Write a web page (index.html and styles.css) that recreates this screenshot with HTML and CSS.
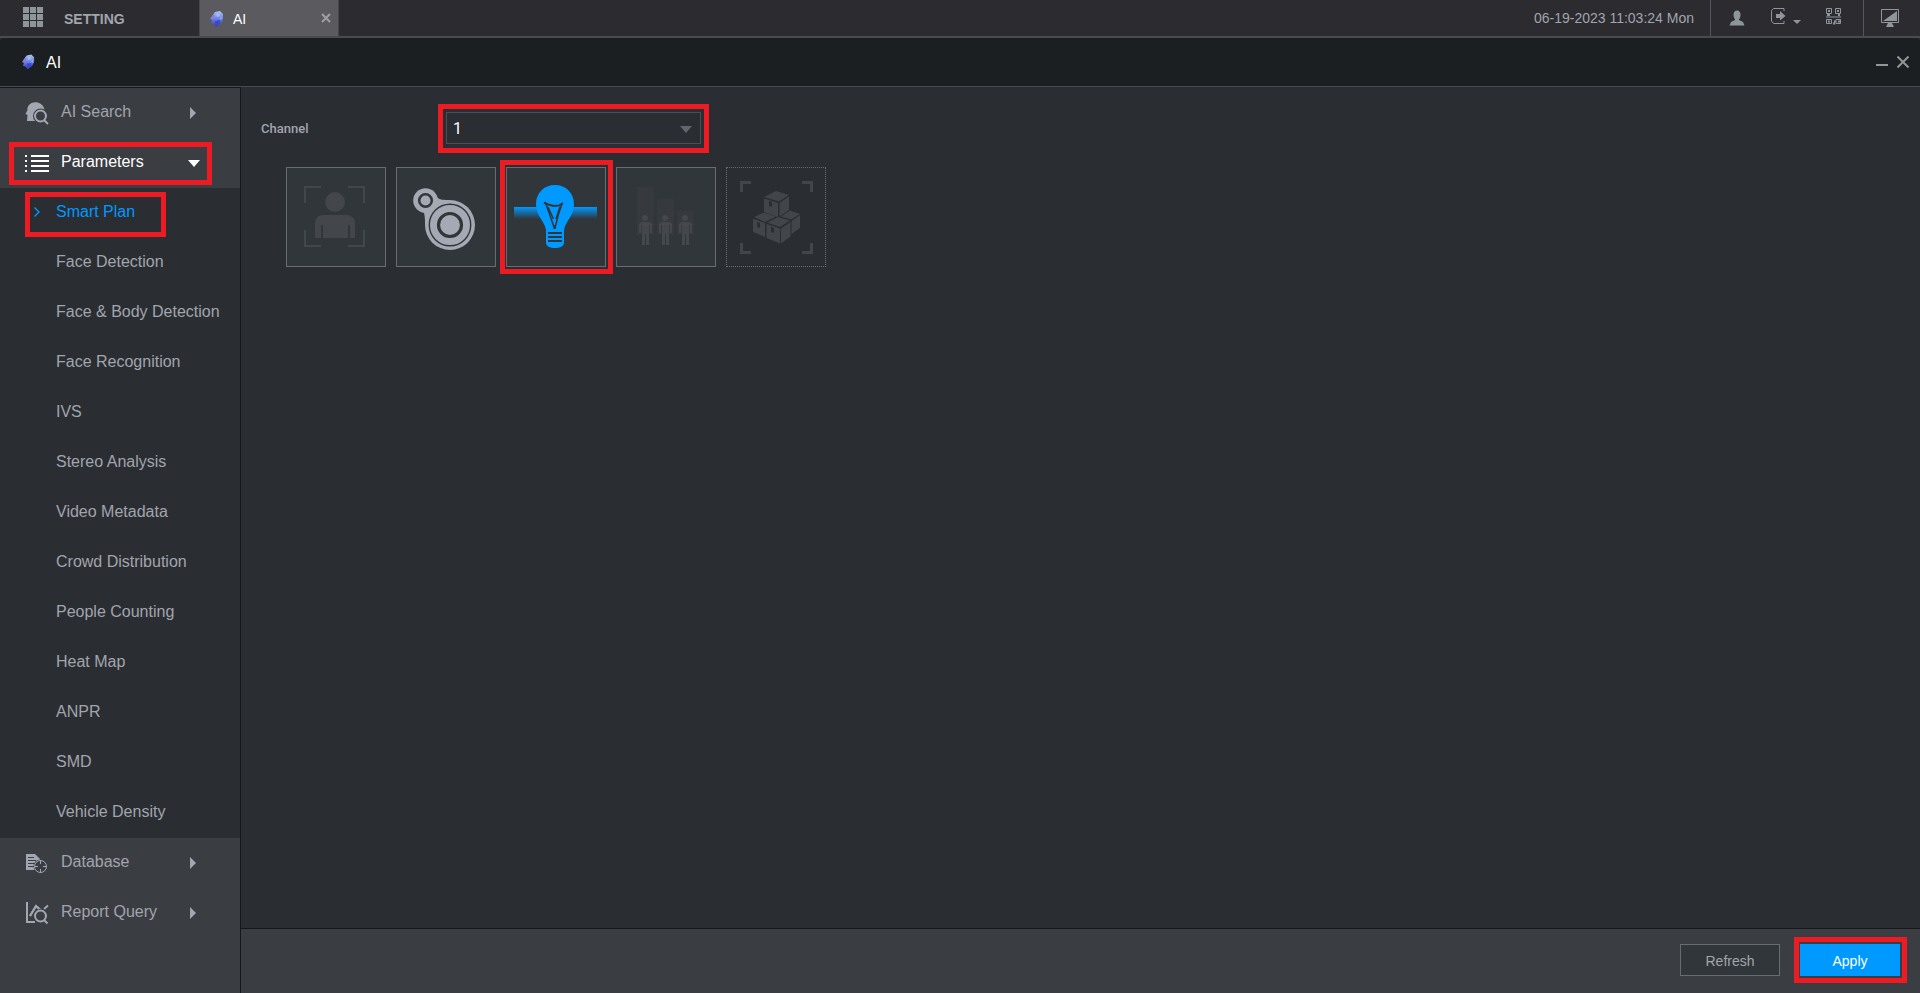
FILE: index.html
```
<!DOCTYPE html>
<html lang="en">
<head>
  <meta charset="UTF-8">
  <meta name="viewport" content="width=device-width, initial-scale=1.0">
  <title>AI - Smart Plan</title>
  <link rel="stylesheet" href="styles.css">
</head>
<body>

  <!-- shared gem logo -->
  <svg class="defs" width="0" height="0" aria-hidden="true">
    <defs>
      <linearGradient id="gem" x1="0" y1="0" x2="0" y2="1">
        <stop offset="0" stop-color="#b4c0f0"/>
        <stop offset="0.5" stop-color="#6a80e0"/>
        <stop offset="1" stop-color="#3434b4"/>
      </linearGradient>
      <linearGradient id="beam" x1="0" y1="0" x2="0" y2="1">
        <stop offset="0" stop-color="#0099ff"/>
        <stop offset="1" stop-color="#0099ff" stop-opacity="0"/>
      </linearGradient>
      <symbol id="logo" viewBox="0 0 14 16">
        <path fill="url(#gem)" d="M5 1 L10 0 L13 3 L13 8 L11 12 L6 16 L4 13 L1 12 L2 9 L0 8 L2 5 Z"/>
        <path fill="#8fc4f4" d="M6 3 L9 2 L10 5 L7 6 Z M10 7 L12 6 L11 9 Z"/>
        <path fill="#a565d8" d="M2 5 L4 3 L4 6 L3 7 Z M7 7 L9 6 L8 8 Z"/>
        <path fill="#3a48cc" d="M5 10 L10 9 L10 12 L6 15 Z"/>
      </symbol>
    </defs>
  </svg>

  <header class="topbar">
    <button class="home">
      <svg width="20" height="20" viewBox="0 0 20 20" fill="#8f969b" aria-hidden="true">
        <path d="M0 0h6v6H0z M7 0h6v6H7z M14 0h6v6h-6z M0 7h6v6H0z M7 7h6v6H7z M14 7h6v6h-6z M0 14h6v6H0z M7 14h6v6H7z M14 14h6v6h-6z"/>
      </svg>
      <span>SETTING</span>
    </button>
    <div class="tab">
      <svg width="14" height="16" aria-hidden="true"><use href="#logo"/></svg>
      <span class="tab-name">AI</span>
      <button class="tab-close" aria-label="Close tab">
        <svg width="10" height="10" viewBox="0 0 10 10" stroke="#a0a0a2" stroke-width="2"><path d="M1 1 L9 9 M9 1 L1 9"/></svg>
      </button>
    </div>
    <time class="clock">06-19-2023 11:03:24 Mon</time>
    <div class="tools">
      <button aria-label="User">
        <svg width="16" height="16" viewBox="0 0 16 16" fill="#8f969b"><ellipse cx="8" cy="5" rx="3.5" ry="4.5"/><path d="M6 8h4v2l4 2l1.500 3.500H.5L2 12l4-2z"/></svg>
      </button>
      <button class="logout" aria-label="Logout">
        <svg width="30" height="16" viewBox="0 0 30 16" fill="#8f969b">
          <path fill="none" stroke="#8f969b" d="M13 3V.5H2.500L.5 2.500V13l2 2.500H13V13"/>
          <path d="M5 6h4V3l5.500 5L9 12.500V10H5z M22 12h8l-4 4z"/>
        </svg>
      </button>
      <button class="qr" aria-label="QR code">
        <svg width="16" height="17" viewBox="0 0 16 17" fill="none" stroke="#8f969b">
          <path d="M.5.5h5v5h-5z M9.500.5h5v5h-5z M.5 11.500h5v4h-5z M10 11.500h4.500v4H10z M0 9h15"/>
          <path stroke-width="2" d="M2 3h2 M11 3h2 M2 13.500h2 M12 13.500h2 M1 7h3 M12 7h2 M7 15.500h2 M8 13.500h2"/>
        </svg>
      </button>
    </div>
    <div class="tools screen">
      <button aria-label="Display">
        <svg width="18" height="18" viewBox="0 0 18 18" fill="#8f969b">
          <path fill="none" stroke="#8f969b" d="M.5.5h17v13H.5z"/>
          <path d="M16 2v10H2z M7 14h4l2 4H5z"/>
        </svg>
      </button>
    </div>
  </header>

  <div class="titlebar">
    <svg width="13" height="16" aria-hidden="true"><use href="#logo"/></svg>
    <h1>AI</h1>
    <button class="minimize" aria-label="Minimize">
      <svg width="12" height="12" viewBox="0 0 12 12" fill="#959595"><path d="M0 8h12v2H0z"/></svg>
    </button>
    <button aria-label="Close">
      <svg width="12" height="12" viewBox="0 0 12 12" stroke="#959595" stroke-width="2"><path d="M.5.5 L11.500 11.500 M11.500.5 L.5 11.500"/></svg>
    </button>
  </div>

  <div class="window">
    <nav class="sidebar">
      <button class="group">
        <svg width="24" height="24" viewBox="0 0 24 24" aria-hidden="true">
          <path fill="#a1a6b0" d="M4 4C6 1 12 0 16 3C19 5 20 8 19 12L17 20H6L5 20H2L2.500 14L.5 13L2.500 9C2 7 3 5 4 4Z"/>
          <circle cx="15.500" cy="15" r="7.500" fill="#3a3d42"/>
          <circle cx="15.500" cy="15" r="5.500" fill="none" stroke="#a1a6b0" stroke-width="2"/>
          <path d="M19 19 L23 23" stroke="#a1a6b0" stroke-width="2"/>
        </svg>
        <span>AI Search</span>
        <i class="arrow"></i>
      </button>
      <button class="group open mark">
        <svg width="24" height="24" viewBox="0 0 24 24" fill="#fff" aria-hidden="true">
          <path d="M0 4h2v2H0z M0 9h2v2H0z M0 14h2v2H0z M0 19h2v2H0z M6 4h18v2H6z M6 9h18v2H6z M6 14h18v2H6z M6 19h18v2H6z"/>
        </svg>
        <span>Parameters</span>
        <i class="arrow"></i>
      </button>
      <div class="submenu">
        <a href="#" class="active mark">
          <svg class="chevron" width="6" height="10" viewBox="0 0 6 10" fill="none" stroke="#0099ff" stroke-width="1.400" aria-hidden="true"><path d="M.5.5 L5 5 L.5 9.500"/></svg>
          Smart Plan
        </a>
        <a href="#">Face Detection</a>
        <a href="#">Face &amp; Body Detection</a>
        <a href="#">Face Recognition</a>
        <a href="#">IVS</a>
        <a href="#">Stereo Analysis</a>
        <a href="#">Video Metadata</a>
        <a href="#">Crowd Distribution</a>
        <a href="#">People Counting</a>
        <a href="#">Heat Map</a>
        <a href="#">ANPR</a>
        <a href="#">SMD</a>
        <a href="#">Vehicle Density</a>
      </div>
      <button class="group">
        <svg width="24" height="24" viewBox="0 0 24 24" aria-hidden="true">
          <path fill="#a1a6b0" d="M1 3h9l5 5v11H1z"/>
          <path stroke="#3a3d42" d="M3 6.500h6 M3 9.500h8 M3 12.500h8 M3 15.500h8"/>
          <circle cx="15.500" cy="15.500" r="7" fill="#3a3d42"/>
          <circle cx="15.500" cy="15.500" r="6" fill="none" stroke="#a1a6b0"/>
          <path stroke="#a1a6b0" d="M15.500 9v4 M15.500 18v4 M9 15.500h4 M18 15.500h4"/>
        </svg>
        <span>Database</span>
        <i class="arrow"></i>
      </button>
      <button class="group">
        <svg width="24" height="24" viewBox="0 0 24 24" fill="none" stroke="#a1a6b0" stroke-width="2" aria-hidden="true">
          <path d="M2 1v20h8 M5 15 L11 5 L16 9 M19 8 L23 4.500"/>
          <circle cx="15.500" cy="15" r="7.500" fill="#3a3d42" stroke="none"/>
          <circle cx="15.500" cy="15" r="5.500"/>
          <path d="M19 19 L22.500 22.500 M5 15 L11 5 L14 8"/>
        </svg>
        <span>Report Query</span>
        <i class="arrow"></i>
      </button>
    </nav>

    <main class="content">
      <div class="plan">
        <div class="field">
          <label for="channel">Channel</label>
          <div class="select mark">
            <select id="channel">
              <option>1</option>
            </select>
          </div>
        </div>

        <div class="tiles">
          <button class="tile" aria-label="Face detection">
            <svg viewBox="0 0 98 98" fill="#43464a">
              <circle cx="48" cy="34" r="10"/>
              <path d="M28 70V55a8 8 0 0 1 8-8h24a8 8 0 0 1 8 8v15h-5V57h-2v13H36V57h-2v13z"/>
              <path fill="none" stroke="#43464a" stroke-width="2" d="M18 35V19h16 M61 19h16v16 M18 62v16h16 M61 78h16V62"/>
            </svg>
          </button>
          <button class="tile" aria-label="IVS">
            <svg viewBox="0 0 98 98" fill="#a4a9b3">
              <path d="M36 42L40 29C42 32 47 32 53 32L28 57C28 51 28 46 26 43Z"/>
              <circle cx="28.500" cy="32.500" r="12.300"/>
              <circle cx="53" cy="57" r="25"/>
              <g fill="none" stroke="#31363a">
                <circle cx="28.500" cy="32.500" r="6.300" stroke-width="2.500"/>
                <circle cx="53" cy="57" r="20.700" stroke-width="1.400"/>
                <circle cx="53" cy="57" r="11.500" stroke-width="3.200"/>
              </g>
            </svg>
          </button>
          <button class="tile mark" aria-label="Smart light">
            <svg viewBox="0 0 98 98" fill="#0099ff">
              <path fill="url(#beam)" d="M7 39h83v12H7z"/>
              <path d="M48 17C59 17 67 25 67 36C67 42 65 46 62 51C59 56 57 59 57 63V75C57 78 53 80 48 80S39 78 39 75V63C39 59 37 56 34 51C31 46 29 42 29 36C29 25 37 17 48 17Z"/>
              <path fill="#31363a" d="M41 64h14v2H41z M41 68h14v2H41z M41 72h14v2H41z"/>
              <g fill="none" stroke="#31363a">
                <path stroke-width="2" d="M37 34.500L41 36.500L47 38L52 37.500L56 35"/>
                <path stroke-width="1.500" d="M38.500 35L42.500 46L47 59 M55 36L51.500 46L48 60 M41 39L46.500 51 M53 39L49 51"/>
                <path stroke-width="2.500" d="M47.500 57V61"/>
              </g>
            </svg>
          </button>
          <button class="tile" aria-label="People counting">
            <svg viewBox="0 0 98 98" fill="#44474c">
              <path fill="#36393e" d="M20 19h17v48H20z M40 31h17v36H40z M60 43h17v24H60z"/>
              <g id="person">
                <circle cx="28" cy="50" r="3"/>
                <path d="M22 65V56l2-2h9l2 2v9h-2v-8h-1v20h-3V66h-1v11h-3V57h-1v8z"/>
              </g>
              <use href="#person" x="20"/>
              <use href="#person" x="40"/>
            </svg>
          </button>
          <button class="tile disabled" aria-label="Stereo analysis" disabled>
            <svg viewBox="0 0 98 98" fill="#42454a">
              <path d="M13 13h11v3h-8v8h-3z M75 13h11v11h-3v-8h-8z M13 75h3v8h8v3H13z M83 75h3v11H75v-3h8z"/>
              <path d="M37 29L49 23L62 27L52 33.500Z M37 30.500L51 35V49L37 44Z M52.500 35L62 28.500V42L52.500 48.500Z"/>
              <path d="M27 49L37 44.500L49 48.500L38 54Z M26 50.500L38 55V69L26 64Z"/>
              <path d="M54 48.500L63 42.500L73 46L64 51.500Z M64.500 53L73 47V60L64.500 66Z"/>
              <path d="M40 54.500L51 49L63 52.500L53 59Z M39.500 56L53 60.500V75.500L39.500 70Z M54 60.500L63.500 54V68.500L54 75.500Z"/>
              <path fill="#2a2d32" d="M42 33l3 1v5l-3-1z M30 54l3 1v5l-3-1z M44 59l3 1v5l-3-1z"/>
            </svg>
          </button>
        </div>
      </div>

      <footer class="actions">
        <button class="btn">Refresh</button>
        <button class="btn primary mark">Apply</button>
      </footer>
    </main>
  </div>

</body>
</html>
```
FILE: styles.css
```
* {
  box-sizing: border-box;
}
body {
  font-family: "Liberation Sans", Arial, sans-serif;
  font-size: 14px;
  background-color: #2a2d32;
  color: #a1a5ad;
  margin: 0;
  min-height: 100vh;
  display: flex;
  flex-direction: column;
}
button {
  font: inherit;
  color: inherit;
  background: none;
  border: none;
  padding: 0;
  cursor: pointer;
}
svg {
  display: block;
  flex: none;
}
.defs {
  position: absolute;
}

/* red callout frame */
.mark {
  position: relative;
}
.mark::before {
  content: "";
  position: absolute;
  inset: -8px -8px -8px -7px;
  border: 5px solid #ed1c24;
  pointer-events: none;
  z-index: 1;
}

/* top bar */
.topbar {
  display: flex;
  height: 38px;
  background-color: #2b2b30;
  border-bottom: 2px solid #4a4b50;
}
.home {
  display: flex;
  align-items: center;
  gap: 21px;
  width: 199px;
  padding-left: 23px;
  padding-bottom: 2px;
  font-weight: bold;
}
.home span {
  padding-top: 4px;
}
.tab {
  display: flex;
  align-items: center;
  width: 140px;
  padding: 2px 7px 0 10px;
  background-color: #5a5a5f;
  border: 1px solid #46464b;
  border-width: 0 1px;
  color: #fff;
}
.tab-name {
  flex: 1;
  padding-left: 9px;
}
.tab-close {
  padding-bottom: 2px;
}
.clock {
  margin-left: auto;
  padding-right: 16px;
  line-height: 36px;
}
.tools {
  display: flex;
  align-items: center;
  width: 153px;
  padding-left: 18px;
  border-left: 1px solid #55565b;
}
.tools .logout {
  margin-left: 26px;
  padding-bottom: 4px;
}
.tools .qr {
  margin-left: 25px;
  padding-bottom: 4px;
}
.screen {
  width: 57px;
  padding-left: 17px;
}

/* window title */
.titlebar {
  display: flex;
  align-items: center;
  height: 49px;
  padding: 0 11px 0 22px;
  background-color: #1b1f22;
  border-bottom: 1px solid #4a4b50;
  border-radius: 4px 4px 0 0;
}
.titlebar h1 {
  flex: 1;
  margin: 0;
  padding: 2px 0 0 11px;
  font-size: 16px;
  font-weight: normal;
  color: #fff;
}
.minimize {
  margin-right: 9px;
}

.window {
  flex: 1;
  display: flex;
}

/* side menu */
.sidebar {
  width: 241px;
  flex: none;
  background-color: #3a3d42;
  border-top: 1px solid #15171a;
  border-right: 1px solid #15171a;
  font-size: 16px;
}
.group {
  display: flex;
  align-items: center;
  width: 100%;
  height: 50px;
  padding: 0 40px 0 25px;
  text-align: left;
}
.group span {
  flex: 1;
  padding: 0 0 3px 12px;
}
.group.open {
  color: #fff;
}
.group.mark::before {
  inset: 4px 28px 3px 9px;
}
.arrow {
  margin-right: 4px;
  border: 6px solid transparent;
  border-left-color: #a1a6b0;
  border-right-width: 0;
}
.open .arrow {
  margin-right: 0;
  border: 6px solid transparent;
  border-top: 7px solid #fff;
  border-bottom-width: 0;
}
.submenu {
  background-color: #2a2d32;
}
.submenu a {
  display: flex;
  align-items: center;
  height: 50px;
  padding: 0 0 3px 56px;
  color: inherit;
  text-decoration: none;
}
.submenu .active {
  padding-left: 34px;
  gap: 16px;
  color: #0099ff;
}
.submenu .mark::before {
  inset: 4px 74px 1px 25px;
}

/* content */
.content {
  flex: 1;
  display: flex;
  flex-direction: column;
}
.plan {
  flex: 1;
  padding: 25px 20px;
  font-family: Roboto, sans-serif;
}
.field {
  display: flex;
  align-items: center;
}
.field label {
  width: 185px;
  font-size: 13px;
  font-weight: 500;
}
.select::after {
  content: "";
  position: absolute;
  right: 9px;
  top: 14px;
  border: 6px solid transparent;
  border-top: 7px solid #62656b;
  border-bottom-width: 0;
  pointer-events: none;
}
.select.mark::before {
  inset: -8px -8px -9px;
}
.select select {
  display: block;
  appearance: none;
  width: 255px;
  height: 32px;
  padding: 0 6px;
  background-color: #2a2d32;
  border: 1px solid #4b4e58;
  color: #fff;
  font-family: inherit;
  font-size: 16px;
}
.tiles {
  display: flex;
  gap: 10px;
  margin: 23px 0 0 25px;
}
.tile {
  width: 100px;
  height: 100px;
  background-color: #31363a;
  border: 1px solid #686c73;
}
.tile.disabled {
  background: none;
  border-style: dotted;
}

/* bottom buttons */
.actions {
  display: flex;
  justify-content: flex-end;
  gap: 20px;
  height: 65px;
  padding: 15px 20px;
  background-color: #3a3d42;
  border-top: 1px solid #15171a;
}
.btn {
  width: 100px;
  height: 32px;
  padding-top: 2px;
  background-color: #31363a;
  border: 1px solid #686c73;
}
.btn.primary {
  background-color: #0099ff;
  border-color: #0099ff;
  color: #fff;
}
```
